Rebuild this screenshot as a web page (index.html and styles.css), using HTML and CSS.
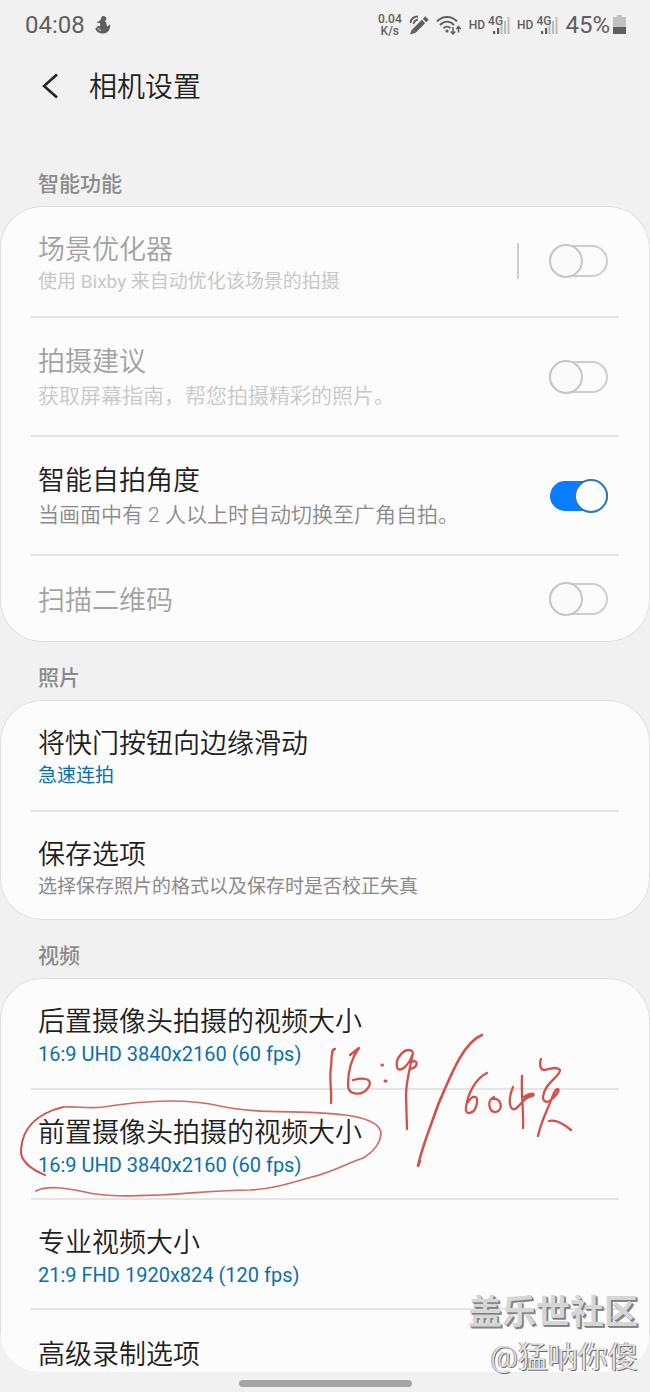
FILE: index.html
```html
<!DOCTYPE html>
<html lang="zh-CN">
<head>
  <meta charset="UTF-8" />
  <meta name="viewport" content="width=device-width, initial-scale=1" />
  <title>相机设置</title>
  <link rel="stylesheet" href="styles.css">
</head>
<body>
  <div class="statusbar">
    <span class="clock">04:08</span>
    <svg class="notify" width="16" height="20" viewBox="0 0 16 20">
      <path d="M8.500 1c1.800 0 2.800 1 2.800 2.800 0 1.200-.6 2-1.300 2.500 1.600 1.200 2 3 1.800 5 1.200 0 2.200-.8 3.200-2.300C16 13 13.500 18.500 8.500 18.500 4 18.500 1 16.500.3 13.500L3.500 10.500l1.500 1C5.500 9.500 5 8.500 4.500 8L1.500 7.500 5.700 5C5.700 3 6.500 1 8.500 1z" fill="#5f5f5f"/>
      <path d="M2.800 12.800c.5 1.500 1.500 2.200 3 2.500" stroke="#f1f1f1" stroke-width="1" fill="none"/>
    </svg>
    <div class="status-right">
      <div class="speed"><span>0.04</span><span>K/s</span></div>
      <svg width="20" height="20" viewBox="0 0 20 20" fill="none" stroke="#5f5f5f">
        <path d="M1.500 8C2 4 5 1.500 9 1.500M4.500 9c.5-2.500 2-4 4.500-4.500" stroke-width="1.800"/>
        <path d="M5 16L14.500 6.500" stroke-width="4.600"/>
        <path d="M15.500 5.500l2.500-2.500" stroke-width="4.600"/>
        <path d="M1 19.500l2-5.500 3.700 3.700z" fill="#5f5f5f" stroke="none"/>
      </svg>
      <svg width="26" height="20" viewBox="0 0 26 20" fill="none" stroke="#5f5f5f" stroke-width="1.900">
        <path d="M1 6.500C6.500.5 15.500.5 21 6.500M4 10c4-4.500 10-4.500 14 0M7.500 13.300c2-2.200 5-2.200 7 0"/>
        <circle cx="11" cy="16" r="1.600" fill="#5f5f5f" stroke="none"/>
        <path d="M17 12v7M14.800 16.500l2.200 2.500 2.200-2.500M22.500 17.500v-6M20.300 14l2.200-2.500 2.200 2.500" stroke-width="1.500"/>
      </svg>
      <span class="hd">HD</span>
      <div class="signal">
        <span>4G</span>
        <svg width="22" height="20" viewBox="0 0 22 20">
          <path d="M5 16h2.200v3H5zM9 13h2.200v6H9z" fill="#5f5f5f"/>
          <path d="M12.500 10h2v9h-2zM16 6h2v13h-2zM19.500 2h2v17h-2z" fill="#bdbdbd"/>
        </svg>
      </div>
      <span class="hd">HD</span>
      <div class="signal">
        <span>4G</span>
        <svg width="22" height="20" viewBox="0 0 22 20">
          <path d="M5 16h2.200v3H5zM9 13h2.200v6H9z" fill="#5f5f5f"/>
          <path d="M12.500 10h2v9h-2zM16 6h2v13h-2zM19.500 2h2v17h-2z" fill="#bdbdbd"/>
        </svg>
      </div>
      <span class="percent">45%</span>
      <svg width="13" height="20" viewBox="0 0 13 20">
        <path d="M4 0h5v2h4v11H0V2h4z" fill="#c2c2c2"/>
        <path d="M0 12h13v7H0z" fill="#5f5f5f"/>
      </svg>
    </div>
  </div>

  <header class="header">
    <button class="back" aria-label="返回">
      <svg width="16" height="26" viewBox="0 0 16 26"><path d="M15 1.500L2 13l13 11.500" fill="none" stroke="#222" stroke-width="2.600"/></svg>
    </button>
    <h1>相机设置</h1>
  </header>

  <main class="content">
    <h2>智能功能</h2>
    <section class="card">
      <div class="row disabled">
        <label class="text" for="scene"><span class="title">场景优化器</span><span class="sub">使用 Bixby 来自动优化该场景的拍摄</span></label>
        <span class="separator"></span>
        <input class="toggle" type="checkbox" id="scene" disabled>
      </div>
      <div class="row tall disabled">
        <label class="text" for="tips"><span class="title">拍摄建议</span><span class="sub">获取屏幕指南，帮您拍摄精彩的照片。</span></label>
        <input class="toggle" type="checkbox" id="tips" disabled>
      </div>
      <div class="row tall">
        <label class="text" for="selfie"><span class="title">智能自拍角度</span><span class="sub">当画面中有 2 人以上时自动切换至广角自拍。</span></label>
        <input class="toggle" type="checkbox" id="selfie" checked>
      </div>
      <div class="row single disabled">
        <label class="text" for="qr"><span class="title">扫描二维码</span></label>
        <input class="toggle" type="checkbox" id="qr" disabled>
      </div>
    </section>

    <h2>照片</h2>
    <section class="card">
      <a class="row" href="#"><span class="text"><span class="title">将快门按钮向边缘滑动</span><span class="sub value">急速连拍</span></span></a>
      <a class="row" href="#"><span class="text"><span class="title">保存选项</span><span class="sub">选择保存照片的格式以及保存时是否校正失真</span></span></a>
    </section>

    <h2>视频</h2>
    <section class="card">
      <a class="row" href="#"><span class="text"><span class="title">后置摄像头拍摄的视频大小</span><span class="sub value latin">16:9 UHD 3840x2160 (60 fps)</span></span></a>
      <a class="row" href="#"><span class="text"><span class="title">前置摄像头拍摄的视频大小</span><span class="sub value latin">16:9 UHD 3840x2160 (60 fps)</span></span></a>
      <a class="row" href="#"><span class="text"><span class="title">专业视频大小</span><span class="sub value latin">21:9 FHD 1920x824 (120 fps)</span></span></a>
      <a class="row single" href="#"><span class="text"><span class="title">高级录制选项</span></span></a>

      <!-- red pen marks -->
      <svg class="ink" width="600" height="230" viewBox="0 978 600 230" fill="none" stroke="#d4504b" stroke-linecap="round" stroke-linejoin="round">
        <path d="M45 1175C30 1169 20 1160 21 1150C22 1130 35 1114 63 1107C78 1106 88 1109 103 1107C140 1101 185 1098 220 1106C260 1115 310 1109 352 1116C368 1119 381 1124 381 1134C380 1144 373 1152 363 1158C347 1163 332 1173 308 1178C285 1185 270 1189 250 1190C215 1190 190 1194 160 1195C130 1196 105 1197 85 1192C65 1188 48 1185 36 1191" stroke="#cf6a66" stroke-width="1.700"/>
        <path d="M45 1175C30 1169 20 1160 21 1150C22 1130 35 1114 63 1107" stroke-width="1.800"/>
        <g stroke-width="2.300">
          <path d="M335 1049C331 1049 332 1056 331 1067C329 1080 332 1090 331 1103"/>
          <path d="M350 1055L359 1048C353 1056 348 1068 348 1085C348 1096 362 1096 368 1088C373 1081 368 1076 353 1080"/>
          <path d="M382 1065h.5M385 1081h1" stroke-width="3"/>
          <path d="M412 1051C405 1047 395 1058 397 1067C399 1074 409 1066 413 1053C410 1068 406 1082 406 1095L407 1129M411 1062C418 1059 419 1066 411 1069"/>
          <path d="M482 1035C464 1042 452 1072 438 1105C430 1128 422 1147 418 1166L420 1161" stroke-width="2.600"/>
          <path d="M487 1073C476 1078 468 1093 466 1107C464 1116 475 1115 477 1103C478 1096 473 1094 468 1102"/>
          <path d="M494 1097C487 1099 488 1113 496 1112C504 1110 501 1097 493 1099"/>
          <path d="M513 1087C508 1099 509 1111 515 1109C521 1106 523 1097 532 1096C536 1095 533 1091 524 1097M522 1076C521 1097 524 1112 523 1128"/>
          <path d="M541 1059C539 1063 540 1070 544 1070C549 1070 556 1065 560 1070C561 1076 544 1083 543 1097C543 1103 549 1103 552 1099C556 1095 560 1091 558 1089C554 1089 552 1099 547 1110C543 1119 540 1127 538 1136M549 1121C557 1119 565 1125 571 1130"/>
        </g>
      </svg>
    </section>
  </main>

  <div class="navbar"><span class="handle"></span></div>

  <div class="watermark">
    <strong>盖乐世社区</strong>
    <span>@猛呐你傻</span>
  </div>
</body>
</html>
```
FILE: styles.css
```css
:root {
  --background: #f1f1f1;
  --card: #fcfcfc;
  --line: #dedede;
  --text: #1f1f1f;
  --muted: #8a8a8a;
  --status: #5f5f5f;
  --accent: #0b6fac;
  --switch: #0a7cff;
}

*, *::before {
  box-sizing: border-box;
}

body {
  margin: 0;
  height: 100vh;
  display: flex;
  flex-direction: column;
  position: relative;
  overflow: hidden;
  font-family: Roboto, "Noto Sans CJK SC", sans-serif;
  background: var(--background);
  color: var(--text);
}

.statusbar {
  display: flex;
  align-items: center;
  height: 50px;
  flex: none;
  padding: 0 24px 0 25px;
  color: var(--status);
}

.clock {
  font-size: 24px;
}

.notify {
  margin-left: 10px;
}

.status-right {
  display: flex;
  align-items: center;
  margin-left: auto;
  gap: 7px;
}

.status-right svg {
  flex: none;
}

.speed {
  display: flex;
  flex-direction: column;
  align-items: center;
  font-size: 12px;
  line-height: 12px;
  font-weight: 500;
}

.hd {
  font-size: 12px;
  font-weight: 500;
}

.signal {
  position: relative;
  display: flex;
  margin-left: -4px;
}

.signal span {
  position: absolute;
  left: 0;
  top: 0;
  font-size: 12px;
  line-height: 12px;
  font-weight: 500;
}

.percent {
  font-size: 24px;
  margin-right: -4px;
}

.header {
  display: flex;
  align-items: center;
  flex: none;
  height: 72px;
  padding-left: 34px;
}

.back {
  display: flex;
  padding: 8px;
  border: none;
  background: none;
}

h1 {
  margin: 0 0 0 23px;
  padding-top: 4px;
  font-size: 28px;
  line-height: 36px;
  font-weight: 350;
}

.content {
  flex: 1;
  min-height: 0;
  padding-top: 26px;
  overflow-y: auto;
  scrollbar-width: none;
  border-radius: 0 0 40px 40px;
}

h2 {
  height: 58px;
  margin: 0;
  padding: 9px 38px 0;
  font-size: 21px;
  line-height: 54px;
  font-weight: 500;
  color: var(--muted);
}

.card {
  position: relative;
  padding: 0 31px;
  background: var(--card);
  box-shadow: inset 0 0 0 1px var(--line);
  border-radius: 42px;
}

.row {
  display: flex;
  align-items: center;
  min-height: 110px;
  padding: 0 11px 0 7px;
  color: inherit;
  text-decoration: none;
}

.row + .row {
  border-top: 2px solid #e4e4e4;
}

.row.tall {
  min-height: 119px;
}

.row.single {
  min-height: 88px;
}

.text {
  flex: 1;
  display: flex;
  flex-direction: column;
  padding-top: 5px;
}

.tall .text,
.single .text {
  padding-top: 3px;
}

.title {
  font-size: 27px;
  line-height: 36px;
  font-weight: 350;
}

.sub {
  font-size: 19px;
  line-height: 28px;
  color: var(--muted);
}

.tall .sub {
  font-size: 21px;
  line-height: 32px;
  font-weight: 350;
}

.value {
  color: var(--accent);
}

.latin {
  font-size: 20px;
}

.disabled .title {
  color: #a2a2a2;
}

.disabled .sub {
  color: #c8c8c8;
}

.separator {
  width: 2px;
  height: 36px;
  margin-right: 30px;
  background: #cdcdcd;
}

.toggle {
  appearance: none;
  display: flex;
  align-items: center;
  width: 59px;
  height: 32px;
  margin: 0;
  border: 2px solid #cdcdcd;
  border-radius: 16px;
}

.toggle::before {
  content: "";
  width: 34px;
  height: 34px;
  flex: none;
  margin-left: -2px;
  border: 2px solid #c6c6c6;
  border-radius: 50%;
  background: #fafafa;
}

.toggle:checked {
  justify-content: flex-end;
  width: 58px;
  height: 30px;
  border-color: var(--switch);
  background: var(--switch);
}

.toggle:checked::before {
  margin-right: -2px;
  border-color: #2b78bd;
  background: #fff;
}

.ink {
  position: absolute;
  left: 0;
  top: 0;
  pointer-events: none;
}

.navbar {
  display: flex;
  flex: none;
  justify-content: center;
  height: 20px;
  padding-top: 8px;
}

.handle {
  width: 173px;
  height: 7px;
  border-radius: 4px;
  background: #a5a5a5;
}

.watermark {
  position: absolute;
  right: 12px;
  bottom: 14px;
  display: flex;
  flex-direction: column;
  align-items: flex-end;
  color: #d6d6d6;
  text-shadow: 1px 1px 0 #808080, 2px 2px 0 #8c8c8c;
  pointer-events: none;
}

.watermark strong {
  font-size: 34px;
  line-height: 48px;
}

.watermark span {
  font-size: 30px;
  line-height: 42px;
  font-weight: 350;
  color: #e6e6e6;
  text-shadow: 1px 1px 0 #6c6c6c, -1px 0 0 #999;
}
```
